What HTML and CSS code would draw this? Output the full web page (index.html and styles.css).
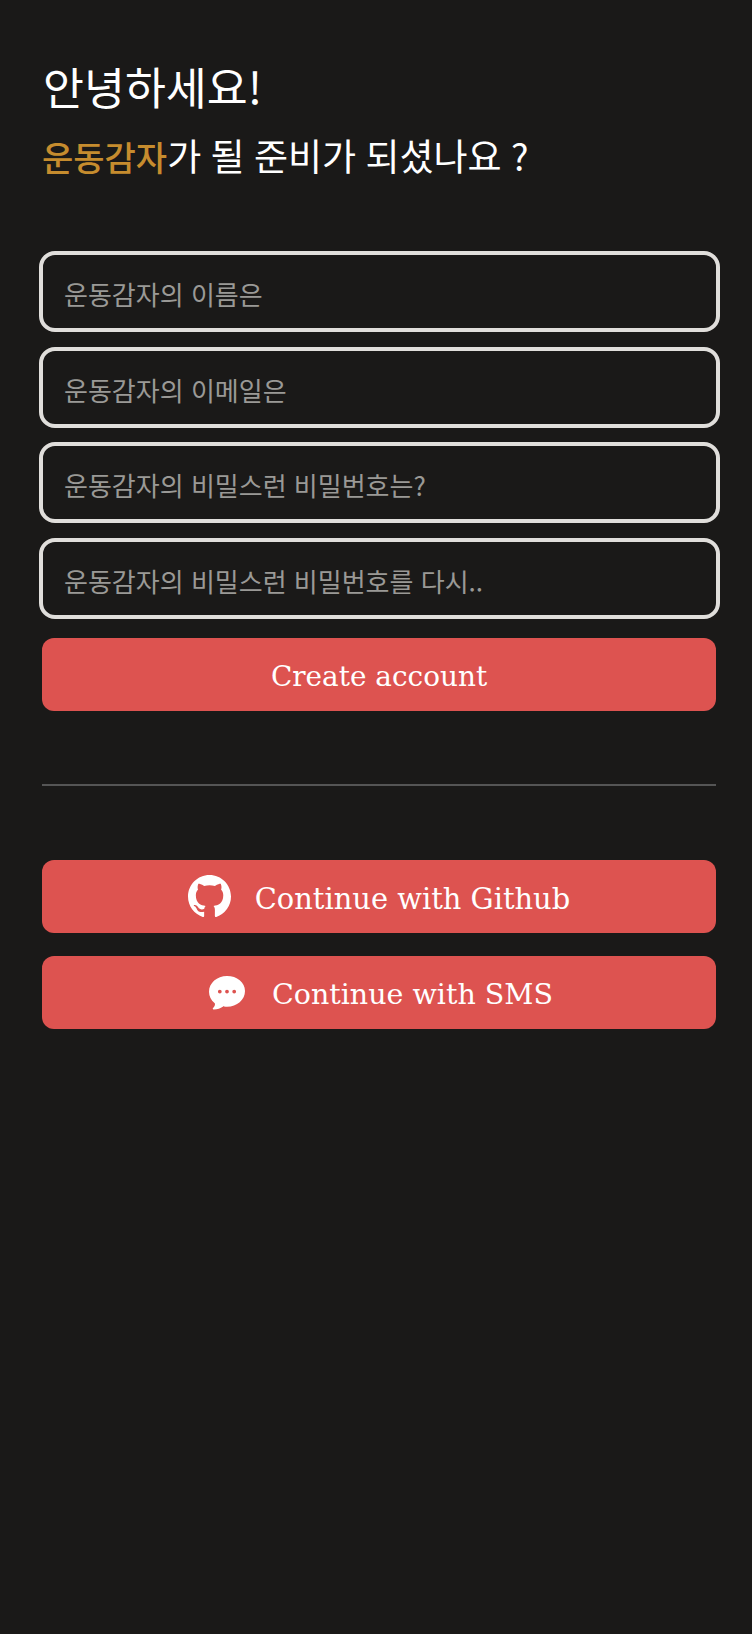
FILE: index.html
```html
<!DOCTYPE html>
<html lang="ko">
<head>
  <meta charset="UTF-8" />
  <meta name="viewport" content="width=device-width, initial-scale=1.0" />
  <title>운동감자</title>
  <link rel="stylesheet" href="styles.css">
</head>
<body>
  <main class="page">
    <header class="welcome">
      <h1>안녕하세요!</h1>
      <p><span class="accent">운동감자</span>가 될 준비가 되셨나요 ?</p>
    </header>

    <form class="signup">
      <input class="field" type="text" placeholder="운동감자의 이름은">
      <input class="field" type="email" placeholder="운동감자의 이메일은">
      <input class="field" type="password" placeholder="운동감자의 비밀스런 비밀번호는?">
      <input class="field" type="password" placeholder="운동감자의 비밀스런 비밀번호를 다시..">
      <button class="button" type="button">Create account</button>
    </form>

    <hr class="divider">

    <div class="social">
      <a class="button" href="#">
        <svg class="icon-github" viewBox="0 0 16 16" aria-hidden="true">
          <path fill="currentColor" d="M8 0C3.58 0 0 3.58 0 8c0 3.54 2.29 6.53 5.47 7.59.4.07.55-.17.55-.38 0-.19-.01-.82-.01-1.49-2.01.37-2.53-.49-2.69-.94-.09-.23-.48-.94-.82-1.13-.28-.15-.68-.52-.01-.53.63-.01 1.08.58 1.23.82.72 1.21 1.87.87 2.33.66.07-.52.28-.87.51-1.07-1.78-.2-3.64-.89-3.64-3.95 0-.87.31-1.59.82-2.15-.08-.2-.36-1.02.08-2.12 0 0 .67-.21 2.2.82.64-.18 1.32-.27 2-.27.68 0 1.36.09 2 .27 1.53-1.04 2.2-.82 2.2-.82.44 1.1.16 1.92.08 2.12.51.56.82 1.27.82 2.15 0 3.07-1.87 3.75-3.65 3.95.29.25.54.73.54 1.48 0 1.07-.01 1.93-.01 2.2 0 .21.15.46.55.38A8.013 8.013 0 0016 8c0-4.42-3.58-8-8-8z"/>
        </svg>
        Continue with Github
      </a>
      <a class="button sms" href="#">
        <svg class="icon-chat" viewBox="0 0 36 34" aria-hidden="true">
          <path fill="currentColor" fill-rule="evenodd" d="M18 0C8 0 0 6.9 0 15.800c0 4.600 2.100 8.500 5.500 11.200.3.3.5.6.5 1 0 1.800-.9 3.100-2 4.100-.5.5-.2 1.300.5 1.300 3.600.1 7-1 9.300-2.700.4-.3.8-.4 1.300-.3.9.2 1.900.3 2.900.3 10 0 18-6.900 18-15.700S28 0 18 0z M10.800 13.700a1.900 1.900 0 1 0 0 3.800 1.900 1.900 0 0 0 0-3.800z M18 13.700a1.900 1.900 0 1 0 0 3.800 1.900 1.900 0 0 0 0-3.800z M25.200 13.700a1.900 1.900 0 1 0 0 3.800 1.900 1.900 0 0 0 0-3.800z"/>
        </svg>
        Continue with SMS
      </a>
    </div>
  </main>
</body>
</html>
```

FILE: styles.css
```css
body {
  margin: 0;
  min-height: 100vh;
  background-color: #1a1918;
  color: #fff;
  font-family: "Noto Sans CJK KR", "Noto Sans", sans-serif;
}

.page {
  padding: 56px 36px 0 42px;
  display: flex;
  flex-direction: column;
}

.welcome h1 {
  margin: 0 0 0 1px;
  font-size: 44.500px;
  font-weight: 400;
  line-height: 60px;
}

.welcome p {
  display: flex;
  align-items: baseline;
  height: 50px;
  margin: 14px 0 0;
  font-size: 37px;
  line-height: 50px;
  white-space: pre;
  word-spacing: -1px;
}

.accent {
  color: #c68c2e;
  font-size: 34px;
  font-weight: 500;
}

.signup {
  margin-top: 71px;
  display: flex;
  flex-direction: column;
  gap: 14.500px;
}

.field {
  box-sizing: border-box;
  width: 681px;
  height: 81px;
  margin-left: -3px;
  padding: 4px 21px 0;
  background: transparent;
  border: 4px solid #e0dedb;
  border-radius: 16px;
  color: #fff;
  font-family: inherit;
  font-size: 26px;
}

.field::placeholder {
  color: #9a9996;
  opacity: 1;
}

.button {
  box-sizing: border-box;
  width: 674px;
  height: 73px;
  display: flex;
  align-items: center;
  justify-content: center;
  padding: 5px 0 0;
  background-color: #dd5350;
  border: none;
  border-radius: 12px;
  color: #fff;
  font-family: "DejaVu Serif", serif;
  font-size: 28.900px;
  text-decoration: none;
}

.signup .button {
  margin-top: 4.500px;
  font-size: 27.900px;
}

.divider {
  width: 674px;
  margin: 73px 0 0;
  border: none;
  border-top: 2px solid #555;
}

.social {
  margin-top: 74px;
  display: flex;
  flex-direction: column;
  gap: 23px;
}

.sms {
  font-size: 28.500px;
  padding: 4px 0 0 4px;
}

.icon-github {
  width: 43px;
  height: 43px;
  margin-right: 24px;
  margin-top: -5px;
}

.icon-chat {
  width: 36px;
  height: 34px;
  margin-right: 27px;
  margin-top: -3px;
}
```
